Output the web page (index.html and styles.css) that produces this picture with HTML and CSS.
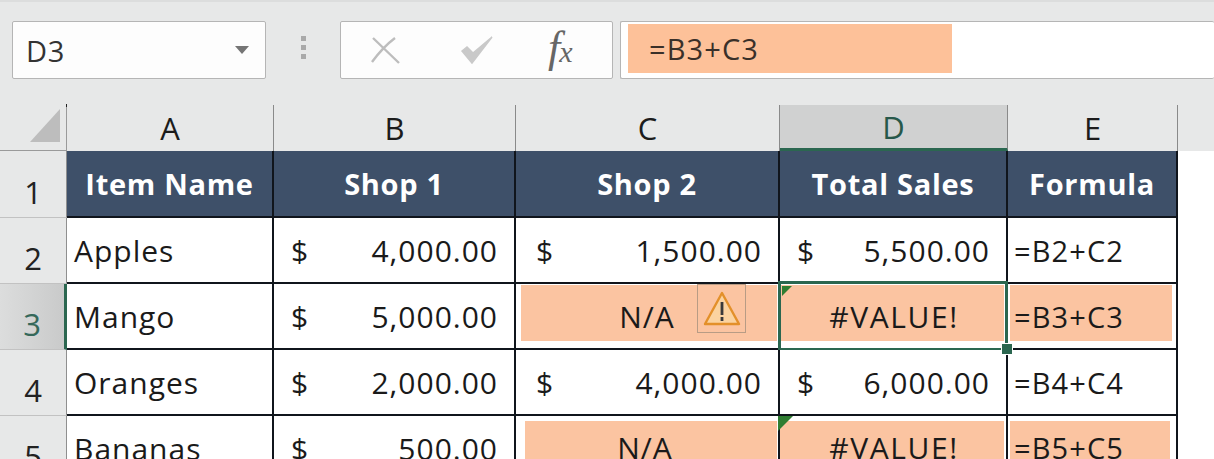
FILE: index.html
```html
<!DOCTYPE html>
<html lang="en">
<head>
    <meta charset="UTF-8">
    <title>Sales sheet</title>
    <link rel="stylesheet" href="styles.css">
</head>
<body>

    <div class="formula-bar">
        <div class="name-box">
            <span>D3</span>
            <span class="name-arrow"></span>
        </div>
        <div class="grip"><i></i><i></i><i></i></div>
        <div class="func-box">
            <svg class="func-icon" width="34" height="30" viewBox="0 0 34 30">
                <path d="M5 3 L31 28 M27 3 Q15 12 4 27" fill="none" stroke="#bdbdbd" stroke-width="2.4"/>
            </svg>
            <svg class="func-icon check" width="34" height="30" viewBox="0 0 34 30">
                <path d="M2 16 L12 28 L32 2 L13 18 L7 12 Z" fill="#c9c9c9" stroke="#c9c9c9" stroke-width="1.5"/>
            </svg>
            <span class="fx">f<sub>x</sub></span>
        </div>
        <div class="formula-input">
            <span class="formula-text">=B3+C3</span>
        </div>
    </div>

    <div class="sheet">
        <div class="corner"><span class="corner-mark"></span></div>
        <div class="col-head">A</div>
        <div class="col-head">B</div>
        <div class="col-head">C</div>
        <div class="col-head selected">D</div>
        <div class="col-head">E</div>
        <div class="col-rest"></div>

        <div class="row-head"><span>1</span></div>
        <div class="title">Item Name</div>
        <div class="title">Shop 1</div>
        <div class="title">Shop 2</div>
        <div class="title">Total Sales</div>
        <div class="title">Formula</div>
        <div class="blank"></div>

        <div class="row-head"><span>2</span></div>
        <div class="cell text">Apples</div>
        <div class="cell money"><span>$</span><span>4,000.00</span></div>
        <div class="cell money money-c"><span>$</span><span>1,500.00</span></div>
        <div class="cell money"><span>$</span><span>5,500.00</span></div>
        <div class="cell form">=B2+C2</div>
        <div class="blank"></div>

        <div class="row-head selected"><span>3</span></div>
        <div class="cell text">Mango</div>
        <div class="cell money"><span>$</span><span>5,000.00</span></div>
        <div class="cell">
            <div class="fill fill-na">N/A</div>
            <div class="warn">
                <svg width="38" height="36" viewBox="0 0 38 36">
                    <path d="M19 2 L36 33 L2 33 Z" fill="#fbd3a0" stroke="#e3902a" stroke-width="2.4" stroke-linejoin="round"/>
                    <path d="M19 11 V24 M19 26 V30" stroke="#3a3a3a" stroke-width="2.8" fill="none"/>
                </svg>
            </div>
        </div>
        <div class="cell active">
            <div class="fill fill-val">#VALUE!</div>
            <span class="tick"></span>
            <span class="handle"></span>
        </div>
        <div class="cell"><div class="fill fill-form">=B3+C3</div></div>
        <div class="blank"></div>

        <div class="row-head"><span>4</span></div>
        <div class="cell text">Oranges</div>
        <div class="cell money"><span>$</span><span>2,000.00</span></div>
        <div class="cell money money-c"><span>$</span><span>4,000.00</span></div>
        <div class="cell money"><span>$</span><span>6,000.00</span></div>
        <div class="cell form">=B4+C4</div>
        <div class="blank"></div>

        <div class="row-head"><span>5</span></div>
        <div class="cell text">Bananas</div>
        <div class="cell money"><span>$</span><span>500.00</span></div>
        <div class="cell"><div class="fill fill-na low">N/A</div></div>
        <div class="cell">
            <div class="fill fill-val low">#VALUE!</div>
            <span class="tick big"></span>
        </div>
        <div class="cell"><div class="fill fill-form low">=B5+C5</div></div>
        <div class="blank"></div>
    </div>

</body>
</html>
```

FILE: styles.css
```css
html, body {
    margin: 0;
    height: 459px;
    overflow: hidden;
}
body {
    font-family: 'Open Sans', 'Noto Sans', sans-serif;
    background-color: #e7e8e8;
    color: #1a1a1a;
}
.formula-bar {
    display: flex;
    height: 105px;
    padding: 19px 0 0 12px;
    border-top: 2px solid #dcdddd;
    box-sizing: border-box;
    align-items: flex-start;
}
.name-box, .func-box, .formula-input {
    height: 58px;
    box-sizing: border-box;
    background-color: #fdfdfd;
    border: 1px solid #b5b5b5;
    border-radius: 2px;
}
.name-box {
    width: 254px;
    display: flex;
    align-items: center;
    justify-content: space-between;
    padding: 0 16px 0 13px;
    font-size: 29px;
    letter-spacing: 0.6px;
    color: #333;
}
.name-arrow {
    width: 0;
    height: 0;
    border-left: 7px solid transparent;
    border-right: 7px solid transparent;
    border-top: 8px solid #757575;
}
.grip {
    width: 74px;
    display: flex;
    flex-direction: column;
    align-items: center;
    gap: 4px;
    padding-top: 15px;
}
.grip i {
    width: 5px;
    height: 5px;
    background-color: #a9a9a9;
}
.func-box {
    width: 273px;
    display: flex;
    align-items: center;
    padding-left: 27px;
    gap: 54px;
}
.check {
    margin-left: 4px;
}
.fx {
    font-family: 'Liberation Serif', serif;
    font-style: italic;
    font-size: 44px;
    color: #666;
    line-height: 1;
    margin-top: -4px;
}
.fx sub {
    font-size: 30px;
    vertical-align: baseline;
    margin-left: -1px;
}
.formula-input {
    flex: 1;
    margin-left: 7px;
    padding: 2px 0 0 7px;
    border-right: none;
    background-color: #fff;
}
.formula-text {
    display: block;
    width: 324px;
    height: 49px;
    line-height: 49px;
    padding-left: 21px;
    box-sizing: border-box;
    background-color: #fdc199;
    font-size: 29px;
    letter-spacing: 1.1px;
    color: #3a3029;
}

.sheet {
    display: grid;
    grid-template-columns: 67px 207px 242px 264px 228px 170px 1fr;
    grid-template-rows: 46px 67px 66px 66px 66px 66px;
}
.corner {
    position: relative;
    display: flex;
    justify-content: flex-end;
    align-items: flex-end;
    padding: 0 6px 8px 0;
    border-right: 1px solid #9a9a9a;
    border-bottom: 1px solid #9a9a9a;
    box-sizing: border-box;
}
.corner::before {
    content: "";
    position: absolute;
    right: -1px;
    top: -1px;
    width: 1px;
    height: 3px;
    background-color: #222;
}
.corner-mark {
    width: 0;
    height: 0;
    border-left: 30px solid transparent;
    border-bottom: 33px solid #bdbdbd;
}
.col-head {
    display: flex;
    align-items: center;
    justify-content: center;
    font-size: 31px;
    color: #1c1c1c;
    border-right: 1px solid #8a8a8a;
    box-sizing: border-box;
}
.col-head.selected {
    background-color: #d0d1d1;
    color: #27584a;
    border-bottom: 3px solid #2b6750;
}
.col-rest {
    background-color: #e7e8e8;
}
.row-head {
    display: flex;
    align-items: flex-end;
    justify-content: center;
    padding-bottom: 6px;
    font-size: 31px;
    line-height: 38px;
    color: #222;
    border-right: 1px solid #8f8f8f;
    border-bottom: 1px solid #c2c2c2;
    box-sizing: border-box;
}
.row-head.selected {
    background: linear-gradient(to right, #dcdddd, #c9caca);
    color: #35685a;
    border-right: 3px solid #2b6750;
}
.title {
    display: flex;
    align-items: center;
    justify-content: center;
    background-color: #3e5069;
    color: #fff;
    font-size: 29px;
    font-weight: 700;
    letter-spacing: 0.7px;
    border-right: 2px solid #10151c;
    border-bottom: 2px solid #10151c;
    box-sizing: border-box;
}
.blank {
    background-color: #fff;
}
.cell {
    position: relative;
    background-color: #fff;
    font-size: 30px;
    letter-spacing: 1px;
    border-right: 2px solid #10151c;
    border-bottom: 2px solid #10151c;
    box-sizing: border-box;
    display: flex;
    align-items: center;
}
.text {
    padding-left: 7px;
}
.money {
    justify-content: space-between;
    padding: 0 16px 0 17px;
}
.money-c {
    padding-left: 20px;
}
.form {
    padding-left: 6px;
    font-size: 29px;
    letter-spacing: 1.1px;
}
.fill {
    align-self: flex-start;
    display: flex;
    align-items: center;
    justify-content: center;
    background-color: #fbc4a1;
    box-sizing: border-box;
    height: 56px;
    margin-top: 1px;
    padding-top: 6px;
}
.fill-na {
    width: 256px;
    margin-left: 5px;
    padding-right: 4px;
}
.fill-val {
    width: 224px;
    margin-left: 0;
    padding-left: 4px;
    letter-spacing: 1.6px;
}
.fill-form {
    width: 162px;
    margin-left: 2px;
    justify-content: flex-start;
    padding-left: 4px;
    font-size: 29px;
    letter-spacing: 1.1px;
}
.fill.low {
    height: 60px;
    margin-top: 5px;
    padding-top: 0;
    padding-bottom: 8px;
}
.fill-na.low {
    margin-left: 9px;
    width: 252px;
    padding-right: 12px;
}
.fill-form.low {
    width: 160px;
}
.warn {
    position: absolute;
    left: 181px;
    top: 0;
    width: 49px;
    height: 49px;
    border: 1px solid #b89c85;
    box-sizing: border-box;
    display: flex;
    align-items: center;
    justify-content: center;
}
.active::after {
    content: "";
    position: absolute;
    left: -2px;
    top: -3px;
    right: -2px;
    bottom: -3px;
    border: 3px solid #2b6750;
}
.tick {
    position: absolute;
    left: 2px;
    top: 2px;
    width: 0;
    height: 0;
    border-top: 10px solid #2f7d32;
    border-right: 10px solid transparent;
}
.tick.big {
    left: -2px;
    top: 0;
    border-top-width: 15px;
    border-right-width: 15px;
}
.handle {
    position: absolute;
    right: -7px;
    bottom: -7px;
    width: 10px;
    height: 10px;
    background-color: #2b6750;
    border: 1px solid #fff;
    z-index: 1;
}
```
